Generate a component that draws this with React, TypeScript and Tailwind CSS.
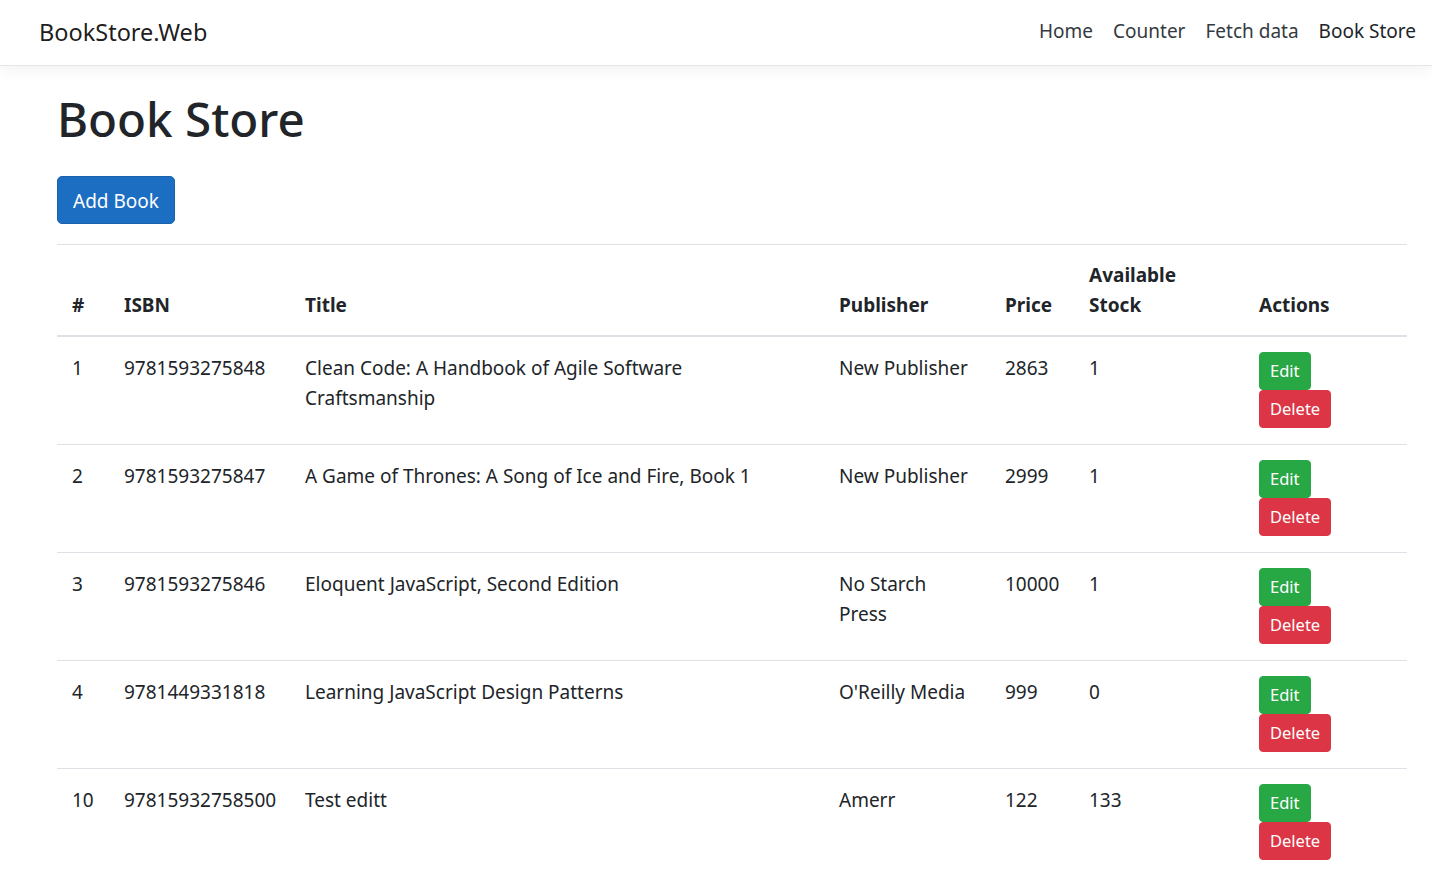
import React from "react";

type Book = {
  id: number;
  isbn: string;
  title: React.ReactNode;
  publisher: React.ReactNode;
  price: number;
  stock: number;
};

const books: Book[] = [
  {
    id: 1,
    isbn: "9781593275848",
    title: (
      <>
        Clean Code: A Handbook of Agile Software
        <br />
        Craftsmanship
      </>
    ),
    publisher: "New Publisher",
    price: 2863,
    stock: 1,
  },
  {
    id: 2,
    isbn: "9781593275847",
    title: "A Game of Thrones: A Song of Ice and Fire, Book 1",
    publisher: "New Publisher",
    price: 2999,
    stock: 1,
  },
  {
    id: 3,
    isbn: "9781593275846",
    title: "Eloquent JavaScript, Second Edition",
    publisher: (
      <>
        No Starch
        <br />
        Press
      </>
    ),
    price: 10000,
    stock: 1,
  },
  {
    id: 4,
    isbn: "9781449331818",
    title: "Learning JavaScript Design Patterns",
    publisher: "O'Reilly Media",
    price: 999,
    stock: 0,
  },
  {
    id: 10,
    isbn: "97815932758500",
    title: "Test editt",
    publisher: "Amerr",
    price: 122,
    stock: 133,
  },
];

function NavBar() {
  return (
    <nav className="flex items-center justify-between h-[66px] bg-white border-b border-[#e5e5e5] shadow-[0_5px_15px_rgba(0,0,0,0.05)] pl-[39px] pr-[6px]">
      <span className="text-[23.5px] leading-[36px] pb-[2px] text-[#000000e6]">BookStore.Web</span>
      <ul className="flex items-center text-[19px] leading-[30px] pb-[4px]">
        <li className="px-[10px] text-[#343a40]">Home</li>
        <li className="px-[10px] text-[#343a40]">Counter</li>
        <li className="px-[10px] text-[#343a40]">Fetch data</li>
        <li className="px-[10px] text-[#212529]">Book Store</li>
      </ul>
    </nav>
  );
}

function BookRow({ book }: { book: Book }) {
  const td = "border-t border-[#dee2e6] px-[15px] pt-[16px] pb-[15px] align-top";
  return (
    <tr>
      <td className={td}>{book.id}</td>
      <td className={td}>{book.isbn}</td>
      <td className={td}>{book.title}</td>
      <td className={td}>{book.publisher}</td>
      <td className={td}>{book.price}</td>
      <td className={td}>{book.stock}</td>
      <td className="border-t border-[#dee2e6] px-[15px] pt-[15px] pb-[16px] align-top">
        <button className="block w-fit bg-[#28a745] border border-[#28a745] text-white text-[16.5px] leading-[26px] px-[10px] py-[5px] rounded-[4px]">
          Edit
        </button>
        <button className="block w-fit bg-[#dc3545] border border-[#dc3545] text-white text-[16.5px] leading-[26px] px-[10px] py-[5px] rounded-[4px]">
          Delete
        </button>
      </td>
    </tr>
  );
}

export default function App() {
  const th = "border-t border-b-2 border-[#dee2e6] px-[15px] pt-[15px] pb-[15px] align-bottom text-left font-bold";
  return (
    <div className="min-h-screen bg-white text-[#212529] font-['Noto_Sans',sans-serif]">
      <NavBar />
      <main className="pl-[57px] pr-[25px] pt-[24px]">
        <h1 className="text-[47.5px] leading-[58px] font-medium">Book Store</h1>
        <div className="mt-[28px] mb-[20px]">
          <button className="bg-[#1b6ec2] border border-[#1861ac] text-white text-[19px] leading-[30px] px-[15px] pt-[9px] pb-[7px] rounded-[5px]">
            Add Book
          </button>
        </div>
        <table className="w-[1350px] table-fixed border-collapse text-[19px] leading-[30px]">
          <colgroup>
            <col className="w-[52px]" />
            <col className="w-[181px]" />
            <col className="w-[534px]" />
            <col className="w-[166px]" />
            <col className="w-[84px]" />
            <col className="w-[170px]" />
            <col className="w-[163px]" />
          </colgroup>
          <thead>
            <tr>
              <th className={th}>#</th>
              <th className={th}>ISBN</th>
              <th className={th}>Title</th>
              <th className={th}>Publisher</th>
              <th className={th}>Price</th>
              <th className={th}>
                Available
                <br />
                Stock
              </th>
              <th className={th}>Actions</th>
            </tr>
          </thead>
          <tbody>
            {books.map((b) => (
              <BookRow key={b.id} book={b} />
            ))}
          </tbody>
        </table>
      </main>
    </div>
  );
}
